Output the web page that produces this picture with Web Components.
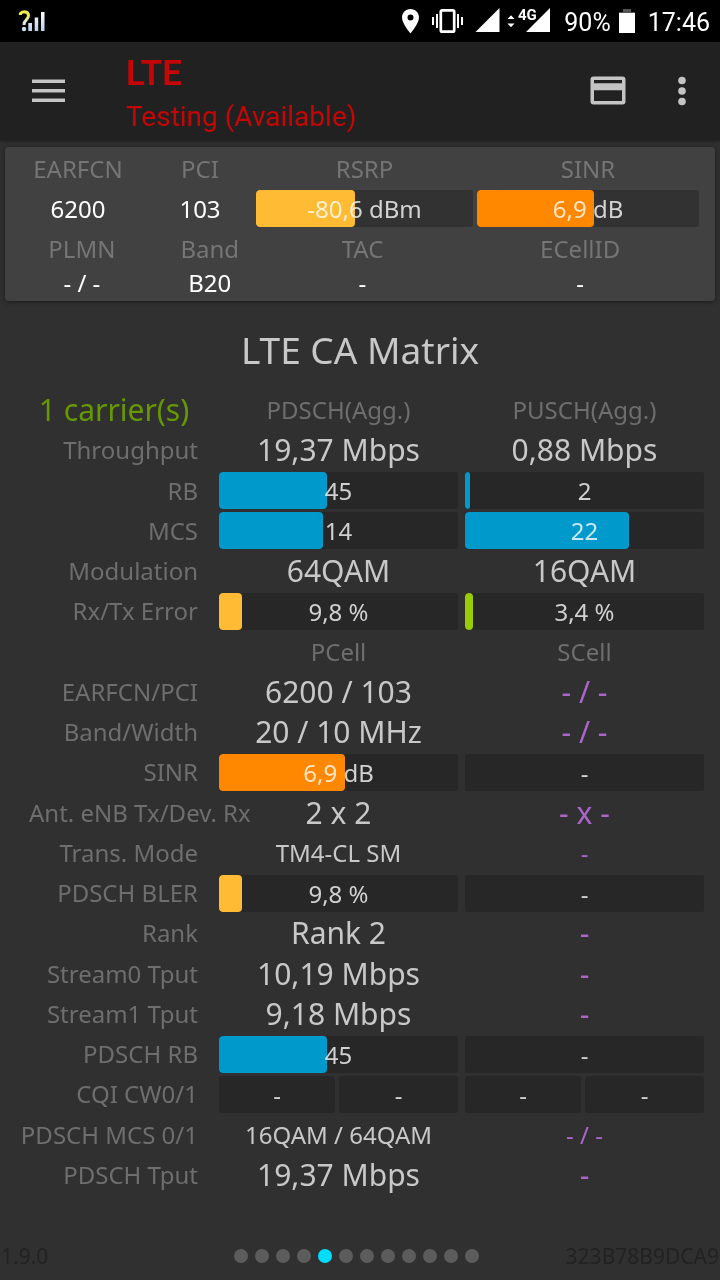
<!DOCTYPE html>
<html lang="en">
<head>
<meta charset="utf-8">
<meta name="viewport" content="width=device-width, initial-scale=1">
<title>LTE CA Matrix</title>
<style>
  html { background: #303030; }
  body {
    margin: 0;
    font-family: "Noto Sans", "Open Sans", sans-serif;
    font-size: 24px;
    color: #c8c8c8;
  }
</style>
</head>
<body>
<signal-app></signal-app>

<template id="signal-app">
  <style>
    :host { display: flex; flex-direction: column; min-height: 100vh; background: #303030; }
    main { flex: 1; display: flex; flex-direction: column; padding-top: 7px; }
    h2 { margin: 25px 0 16px; font-size: 37px; line-height: 48px; font-weight: 400; text-align: center; }
    ca-matrix { flex: 1; }
  </style>
  <status-bar></status-bar>
  <app-bar>
    <span slot="title">LTE</span>
    <span slot="subtitle">Testing (Available)</span>
  </app-bar>
  <main>
    <cell-card></cell-card>
    <h2>LTE CA Matrix</h2>
    <ca-matrix></ca-matrix>
  </main>
  <page-footer pages="12" current="5">
    <span slot="version">1.9.0</span>
    <span slot="device">323B78B9DCA9</span>
  </page-footer>
</template>

<template id="status-bar">
  <style>
    :host {
      display: flex; justify-content: space-between; align-items: center;
      height: 42px; padding: 0 10px 0 17px; background: #000; color: #fff;
      font-family: Roboto, sans-serif; font-size: 25px; line-height: 42px;
    }
    div { display: flex; align-items: center; }
    svg { display: block; }
    span, time { padding-top: 4px; }
    .level { margin: 0 8px 0 14px; }
    .battery { margin-right: 13px; }
  </style>
  <svg width="32" height="42" viewBox="0 0 32 42" role="img" aria-label="Unknown network signal">
    <defs>
      <linearGradient id="q" x1="0" y1="0" x2="0" y2="1">
        <stop offset="0.3" stop-color="#f0ec4a"/><stop offset="0.8" stop-color="#dfe9f0"/>
      </linearGradient>
      <linearGradient id="b" x1="0" y1="0" x2="0" y2="1">
        <stop offset="0" stop-color="#fff"/><stop offset="1" stop-color="#b9d2ee"/>
      </linearGradient>
    </defs>
    <path d="M3.400 15V13.500Q5 11.700 7.600 11.700Q11.500 12 11.500 15.500Q11.500 17.800 9.300 19.800Q7 21.800 7 25" fill="none" stroke="url(#q)" stroke-width="3"/>
    <circle cx="7" cy="29" r="2.200" fill="#c8dff2"/>
    <path d="M11.300 23h3.700v8h-3.700zM17.700 17.500h3.500V31h-3.500zM24 12h3.500v19h-3.500z" fill="url(#b)"/>
  </svg>
  <div>
    <svg width="150" height="42" viewBox="400 0 150 42" fill="#fff" role="img" aria-label="Location on, vibrate, 4G">
      <path fill-rule="evenodd" d="M410.500 9C405.500 9 402 12.700 402 17.500C402 23.500 410.500 33.500 410.500 33.500S419 23.500 419 17.500C419 12.700 415.500 9 410.500 9zM410.500 14.500a3 3 0 1 1 0 6a3 3 0 1 1 0-6z"/>
      <rect x="440.800" y="10.300" width="13.400" height="21.400" rx="1.500" fill="none" stroke="#fff" stroke-width="2.700"/>
      <path d="M436 14h2v14h-2zM432 17h2v8h-2zM457 14h2v14h-2zM461 17h2v8h-2z"/>
      <path d="M499.500 8v24h-24z"/>
      <path d="M507.500 19l3.500-3.800 3.500 3.800zM507.500 23.500h7l-3.500 3.800z"/>
      <path d="M550 8v24h-24z"/>
      <text x="518" y="20" font-family="Roboto, sans-serif" font-weight="700" font-size="15" stroke="#000" stroke-width="2" paint-order="stroke">4G</text>
    </svg>
    <span class="level">90%</span>
    <svg class="battery" width="16" height="42" viewBox="0 0 16 42" role="img" aria-label="Battery">
      <path d="M4 9h8v3h4v4H0v-4h4z" fill="#555"/><path d="M0 13h16v20H0z" fill="#fff"/>
    </svg>
    <time datetime="17:46">17:46</time>
  </div>
</template>

<template id="app-bar">
  <style>
    :host {
      display: flex; align-items: center; height: 98px; background: #212121;
      box-shadow: 0 1px 3px #1a1a1a; font-family: Roboto, sans-serif; color: #c40606;
    }
    button { width: 64px; height: 64px; margin: 0; padding: 0; border: 0; background: none; color: #c4c4c4; }
    svg { display: block; margin: auto; }
    .menu { margin: 0 45px 0 17px; }
    .more { margin-left: 10px; margin-right: 6px; }
    header { flex: 1; padding-top: 7px; }
    h1, p { margin: 0; font-size: 28px; line-height: 42px; font-weight: 400; }
    h1 { font-size: 35px; line-height: 44px; font-weight: 600; }
  </style>
  <button class="menu" aria-label="Menu">
    <svg width="34" height="24" viewBox="0 0 34 24" fill="currentColor"><path d="M0 0.500h33v3.500H0zM0 10h33v3.500H0zM0 19.500h33v3.500H0z"/></svg>
  </button>
  <header>
    <h1><slot name="title"></slot></h1>
    <p><slot name="subtitle"></slot></p>
  </header>
  <button aria-label="SIM card">
    <svg width="36" height="30" viewBox="0 0 36 30" fill="currentColor"><path fill-rule="evenodd" d="M3.500 0.500h29a3 3 0 0 1 3 3v22a3 3 0 0 1-3 3h-29a3 3 0 0 1-3-3v-22a3 3 0 0 1 3-3zM4 4v3.300h28V4zM4 14.300v10.700h28V14.300z"/></svg>
  </button>
  <button class="more" aria-label="More options">
    <svg width="10" height="30" viewBox="0 0 10 30" fill="currentColor"><circle cx="5" cy="4.500" r="3.800"/><circle cx="5" cy="15" r="3.800"/><circle cx="5" cy="25.500" r="3.800"/></svg>
  </button>
</template>

<template id="level-bar">
  <style>
    :host { display: grid; height: 37px; border-radius: 3px; background: #272727; overflow: hidden; text-align: center; }
    i, span { grid-area: 1 / 1; }
    i { width: var(--level, 0%); border-radius: 4px; background: var(--tone, #0099cc); }
    span { line-height: 37px; font-size: 24px; color: #c8c8c8; mix-blend-mode: screen; }
  </style>
  <i></i><span><slot></slot></span>
</template>

<template id="cell-stat">
  <style>
    :host { display: block; text-align: center; }
    .label { line-height: 38px; color: #757575; }
    .value { color: #fff; line-height: var(--value-line, 30px); }
  </style>
  <div class="label"><slot name="label"></slot></div>
  <div class="value"><slot></slot></div>
</template>

<template id="cell-card">
  <style>
    :host {
      display: block; margin: 0 5px; padding: 3px 14px 3px 5px; border-radius: 4px;
      background: #414141; box-shadow: 0 1px 4px #1c1c1c;
    }
    .row { display: grid; }
    .first { grid-template-columns: 136fr 108fr 221fr 226fr; --value-line: 37px; margin-bottom: 3px; }
    .second { grid-template-columns: 144fr 112fr 194fr 242fr; }
    level-bar { margin: 2px 2px 0; background: #323232; }
    .first span:not([slot]) { display: block; margin-top: 2px; }
  </style>
  <div class="row first">
    <cell-stat><span slot="label">EARFCN</span><span>6200</span></cell-stat>
    <cell-stat><span slot="label">PCI</span><span>103</span></cell-stat>
    <cell-stat><span slot="label">RSRP</span><level-bar level="45.6" tone="#ffbb33">-80,6 dBm</level-bar></cell-stat>
    <cell-stat><span slot="label">SINR</span><level-bar level="52.7" tone="#ff8800">6,9 dB</level-bar></cell-stat>
  </div>
  <div class="row second">
    <cell-stat><span slot="label">PLMN</span>- / -</cell-stat>
    <cell-stat><span slot="label">Band</span>B20</cell-stat>
    <cell-stat><span slot="label">TAC</span>-</cell-stat>
    <cell-stat><span slot="label">ECellID</span>-</cell-stat>
  </div>
</template>

<template id="ca-matrix">
  <style>
    :host { display: grid; padding-right: 12px; }
    table { width: 100%; table-layout: fixed; border-collapse: collapse; }
    .names { width: 216px; }
    th, td { height: 40px; padding: 0 4px 0 3px; text-align: center; white-space: nowrap; line-height: 40px; font-weight: 400; }
    th { color: #6e6e6e; }
    th[scope="row"] { text-align: right; padding: 0 18px 0 0; }
    th[scope="row"].long { text-align: left; padding: 0 0 0 29px; }
    td { font-size: 30px; }
    td.carriers { padding: 0 18px 0 30px; color: #669900; }
    td.small { font-size: 24px; }
    td.none { color: #aa66cc; }
    .pair { display: grid; grid-template-columns: 116fr 119fr; gap: 4px; }
  </style>
  <table>
    <colgroup><col class="names"><col><col></colgroup>
    <tbody>
      <tr><td class="carriers">1 carrier(s)</td><th scope="col">PDSCH(Agg.)</th><th scope="col">PUSCH(Agg.)</th></tr>
      <tr><th scope="row">Throughput</th><td>19,37 Mbps</td><td>0,88 Mbps</td></tr>
      <tr><th scope="row">RB</th><td><level-bar level="45">45</level-bar></td><td><level-bar level="2">2</level-bar></td></tr>
      <tr><th scope="row">MCS</th><td><level-bar level="43.7">14</level-bar></td><td><level-bar level="68.7">22</level-bar></td></tr>
      <tr><th scope="row">Modulation</th><td>64QAM</td><td>16QAM</td></tr>
      <tr><th scope="row">Rx/Tx Error</th><td><level-bar level="9.8" tone="#ffbb33">9,8 %</level-bar></td><td><level-bar level="3.4" tone="#99cc00">3,4 %</level-bar></td></tr>
    </tbody>
    <tbody>
      <tr><td></td><th scope="col">PCell</th><th scope="col">SCell</th></tr>
      <tr><th scope="row">EARFCN/PCI</th><td>6200 / 103</td><td class="none">- / -</td></tr>
      <tr><th scope="row">Band/Width</th><td>20 / 10 MHz</td><td class="none">- / -</td></tr>
      <tr><th scope="row">SINR</th><td><level-bar level="52.7" tone="#ff8800">6,9 dB</level-bar></td><td><level-bar>-</level-bar></td></tr>
      <tr><th scope="row" class="long">Ant. eNB Tx/Dev. Rx</th><td>2 x 2</td><td class="none">- x -</td></tr>
      <tr><th scope="row">Trans. Mode</th><td class="small">TM4-CL SM</td><td class="small none">-</td></tr>
      <tr><th scope="row">PDSCH BLER</th><td><level-bar level="9.8" tone="#ffbb33">9,8 %</level-bar></td><td><level-bar>-</level-bar></td></tr>
      <tr><th scope="row">Rank</th><td>Rank 2</td><td class="none">-</td></tr>
      <tr><th scope="row">Stream0 Tput</th><td>10,19 Mbps</td><td class="none">-</td></tr>
      <tr><th scope="row">Stream1 Tput</th><td>9,18 Mbps</td><td class="none">-</td></tr>
      <tr><th scope="row">PDSCH RB</th><td><level-bar level="45">45</level-bar></td><td><level-bar>-</level-bar></td></tr>
      <tr><th scope="row">CQI CW0/1</th>
        <td><div class="pair"><level-bar>-</level-bar><level-bar>-</level-bar></div></td>
        <td><div class="pair"><level-bar>-</level-bar><level-bar>-</level-bar></div></td></tr>
      <tr><th scope="row">PDSCH MCS 0/1</th><td class="small">16QAM / 64QAM</td><td class="small none">- / -</td></tr>
      <tr><th scope="row">PDSCH Tput</th><td>19,37 Mbps</td><td class="none">-</td></tr>
    </tbody>
  </table>
</template>

<template id="page-footer">
  <style>
    :host {
      display: grid; grid-template-columns: 1fr auto 1fr; align-items: center;
      margin-top: 37px; height: 48px; padding: 0 1px; font-size: 21px; color: #222;
    }
    nav { display: flex; }
    button { width: 14px; height: 14px; margin: 0 7px 0 0; padding: 0; border: 0; border-radius: 50%; background: #5c5c5c; }
    button[aria-current] { background: #00ddff; }
    .device { text-align: right; }
  </style>
  <div><slot name="version"></slot></div>
  <nav aria-label="Pages"></nav>
  <div class="device"><slot name="device"></slot></div>
</template>

<script>
  class TemplateElement extends HTMLElement {
    constructor() {
      super();
      const template = document.getElementById(this.localName);
      this.attachShadow({ mode: "open" }).append(template.content.cloneNode(true));
    }
  }

  class LevelBar extends TemplateElement {
    connectedCallback() {
      const fill = this.shadowRoot.querySelector("i");
      fill.style.setProperty("--level", (this.getAttribute("level") || 0) + "%");
      if (this.hasAttribute("tone")) fill.style.setProperty("--tone", this.getAttribute("tone"));
    }
  }

  class PageFooter extends TemplateElement {
    connectedCallback() {
      const nav = this.shadowRoot.querySelector("nav");
      const current = Number(this.getAttribute("current"));
      nav.replaceChildren();
      for (let page = 1; page <= Number(this.getAttribute("pages")); page++) {
        const dot = document.createElement("button");
        dot.setAttribute("aria-label", "Page " + page);
        if (page === current) dot.setAttribute("aria-current", "page");
        nav.append(dot);
      }
    }
  }

  customElements.define("level-bar", LevelBar);
  customElements.define("page-footer", PageFooter);
  for (const name of ["status-bar", "app-bar", "cell-stat", "cell-card", "ca-matrix", "signal-app"]) {
    customElements.define(name, class extends TemplateElement {});
  }
</script>
</body>
</html>
